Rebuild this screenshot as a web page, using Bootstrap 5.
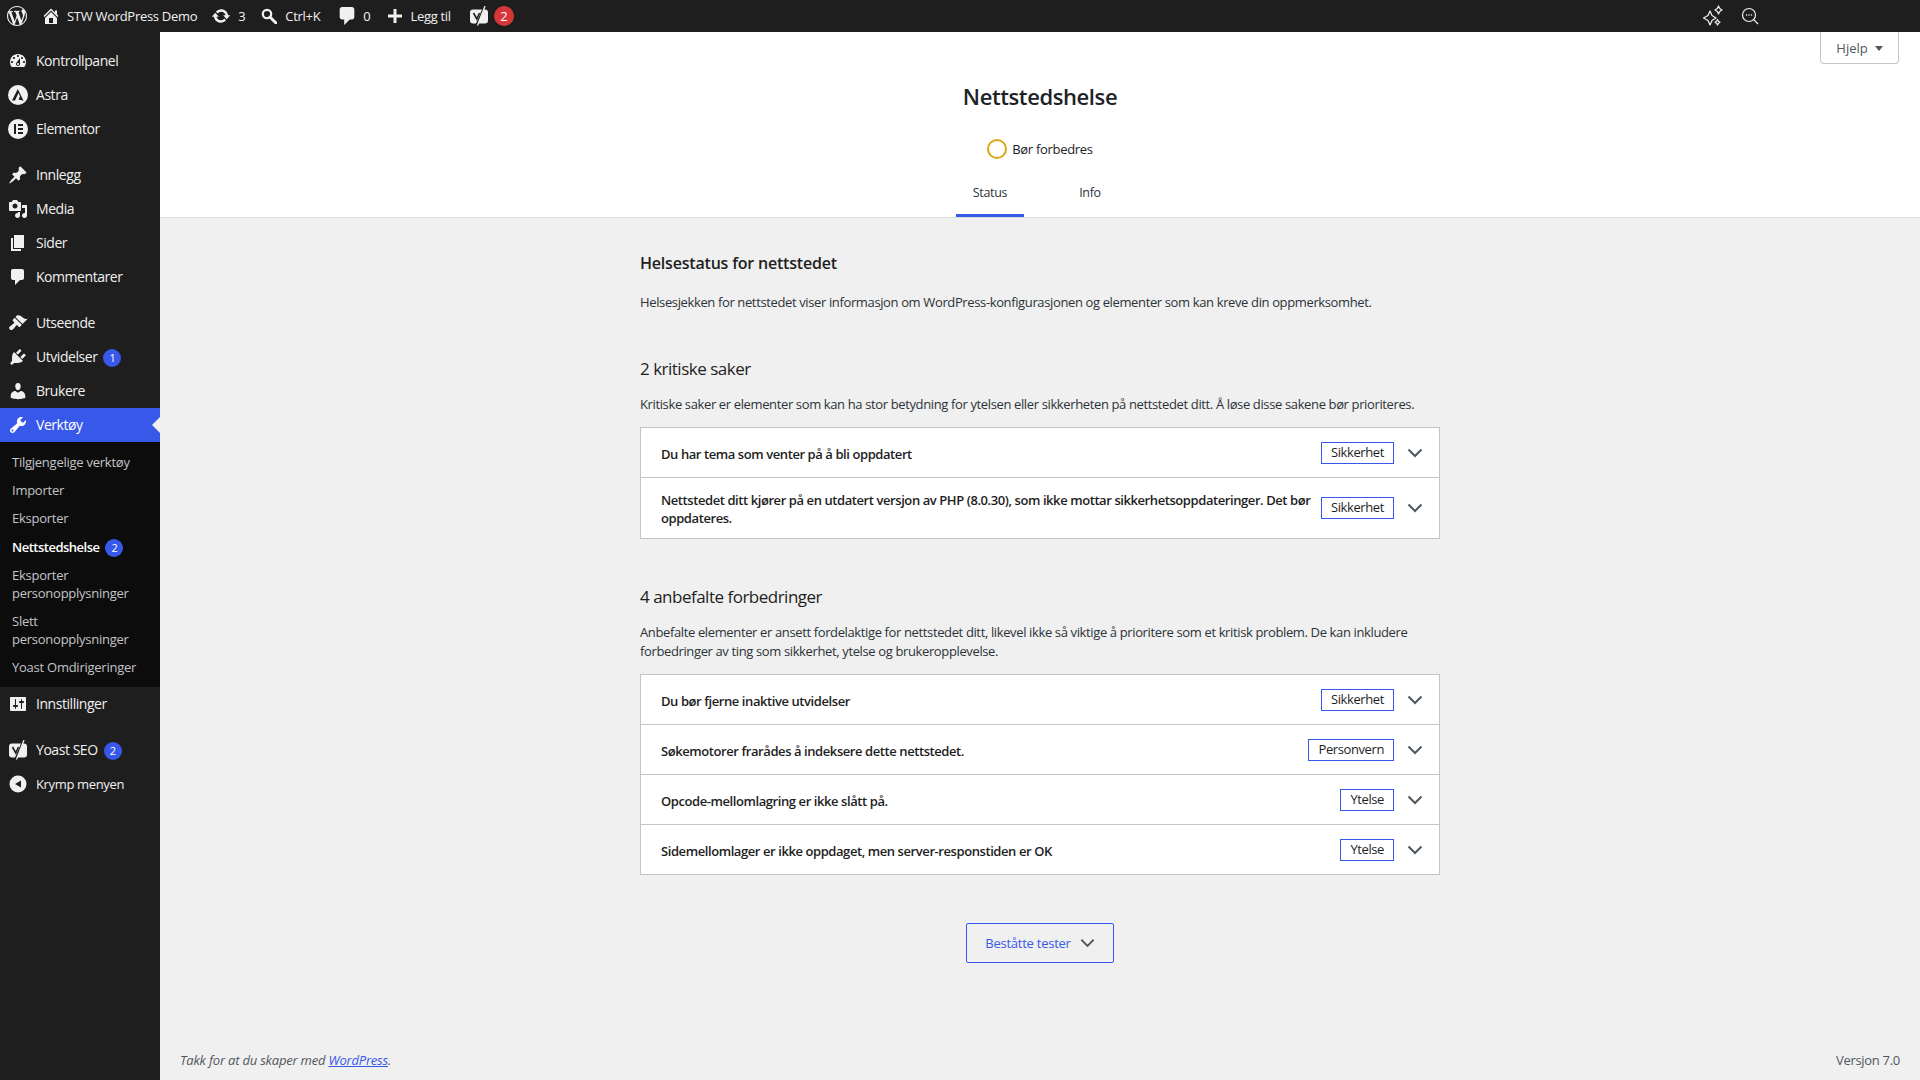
<!DOCTYPE html>
<html lang="nb">
<head>
    <meta charset="UTF-8">
    <meta name="viewport" content="width=device-width, initial-scale=1.0">
    <title>Nettstedshelse</title>
    <link href="https://cdn.jsdelivr.net/npm/bootstrap@5.3.0/dist/css/bootstrap.min.css" rel="stylesheet">
    <style>
        body {
            font-family: "Open Sans", "Noto Sans", sans-serif;
            font-size: 13px;
            letter-spacing: -0.3px;
            line-height: 1.4;
            background-color: #f0f0f0;
            color: #1e1e1e;
            min-height: 1080px;
        }
        svg { fill: currentColor; flex-shrink: 0; display: block; }

        /* top bar */
        .adminbar { height: 32px; background-color: #1e1e1e; color: #f0f0f0; }
        .bar-item { height: 32px; gap: 8px; }
        .bar-logo { margin: 0 16px 0 7px; }
        .bar-site { margin-right: 15px; }
        .bar-update { margin-right: 16px; }
        .bar-search { margin-right: 19px; }
        .bar-comments { margin-right: 18px; }
        .bar-new { margin-right: 19px; }
        .bar-bubble { width: 20px; height: 20px; border-radius: 50%; background-color: #d63638; color: #fff; margin-left: -2px; }
        .bar-right { margin-left: auto; margin-right: 161px; gap: 17px; }

        /* side menu */
        .sidemenu { width: 160px; background-color: #1e1e1e; color: #f0f0f0; padding-top: 12px; flex-shrink: 0; font-size: 14px; letter-spacing: -0.45px; }
        .menu-row { height: 34px; padding-left: 8px; gap: 8px; }
        .menu-row svg { color: #f0f0f0; }
        .menu-gap { height: 12px; }
        .menu-active { background-color: #3858e9; color: #fff; position: relative; }
        .menu-active svg { color: #fff; }
        .menu-active::after {
            content: ""; position: absolute; right: 0; top: 9px;
            border: 8px solid transparent; border-right-color: #f0f0f0; border-left-width: 0;
        }
        .submenu { background-color: #0c0c0c; padding: 6px 0; font-size: 13px; color: #c3c4c7; letter-spacing: -0.25px; }
        .submenu-row { padding: 5px 12px; line-height: 18px; }
        .submenu-on { color: #fff; font-weight: 600; letter-spacing: -0.5px; padding: 6px 12px 4px; }
        .count-dot {
            display: inline-flex; align-items: center; justify-content: center; width: 18px; height: 18px;
            border-radius: 50%; background-color: #3858e9; color: #fff; font-size: 11px; font-weight: 400; margin-left: 3px;
        }
        .menu-row .count-dot { margin-left: 6px; }
        .fold-label { font-size: 13px; letter-spacing: -0.35px; }

        /* page */
        .page-main { min-height: 1048px; }
        .health-head { background-color: #fff; height: 186px; border-bottom: 1px solid #dcdcde; padding-top: 48px; position: relative; }
        .health-title { font-size: 22px; font-weight: 600; line-height: 32px; letter-spacing: -0.4px; color: #1d2327; margin: 0; }
        .health-state { gap: 5px; margin-top: 25px; height: 24px; color: #1d2327; }
        .state-ring { width: 20px; height: 20px; border-radius: 50%; border: 2px solid #dba617; }
        .health-tabs { gap: 32px; margin-top: auto; }
        .health-tab { width: 68px; height: 50px; line-height: 52px; text-align: center; font-size: 12.5px; color: #2c3338; }
        .tab-on { border-bottom: 3px solid #3858e9; font-weight: 500; }
        .help-tab {
            position: absolute; right: 21px; top: 0; width: 79px; height: 32px; padding-top: 2px; background-color: #fff;
            border: 1px solid #c3c4c7; border-top: 0; border-radius: 0 0 4px 4px; color: #50575e; gap: 7px;
        }
        .help-caret { border: 4px solid transparent; border-top: 5px solid #50575e; border-bottom: 0; }

        .health-body { width: 800px; margin: 0 auto; letter-spacing: -0.37px; }
        .sec-title { font-size: 16px; font-weight: 600; line-height: 24px; margin: 33px 0 0; letter-spacing: -0.2px; }
        .sec-sub { font-size: 17px; font-weight: 400; line-height: 26px; margin: 44px 0 0; letter-spacing: -0.5px; }
        .sec-sub-next { margin-top: 45px; }
        .sec-text { line-height: 19px; margin: 13px 0 0; color: #2c3338; }
        .sec-intro { margin-top: 18px; }
        .issue-list { background-color: #fff; border: 1px solid #c3c4c7; margin-top: 13px; }
        .issue-row { min-height: 50px; padding: 11px 16px 11px 20px; font-weight: 600; gap: 8px; border-bottom: 1px solid #c3c4c7; letter-spacing: -0.42px; }
        .issue-row:last-child { border-bottom: 0; min-height: 49px; }
        .issue-text { line-height: 18px; padding-top: 2px; }
        .issue-tag { border: 1px solid #3858e9; height: 22px; padding: 0 9px; line-height: 18px; font-weight: 400; flex-shrink: 0; margin-left: auto; letter-spacing: -0.4px; }
        .chev { color: #50575e; margin-left: 5px; }
        .passed-btn {
            width: 148px; height: 40px; border: 1px solid #3858e9; border-radius: 2px; color: #3858e9; gap: 9px;
            background-color: transparent; margin: 48px auto 0; letter-spacing: -0.25px;
        }
        .page-foot { padding: 0 20px; margin-top: auto; height: 40px; color: #50575e; }
        .page-foot em { letter-spacing: -0.2px; }
        .page-foot a { color: #3858e9; }
    </style>
</head>
<body>

<!-- Admin bar -->
<div class="adminbar d-flex align-items-center">
    <svg class="bar-logo" width="20" height="20" viewBox="0 0 20 20"><path d="M20 10c0-5.51-4.49-10-10-10C4.48 0 0 4.49 0 10c0 5.52 4.48 10 10 10 5.51 0 10-4.48 10-10zM7.78 15.37L4.37 6.22c.55-.02 1.17-.08 1.17-.08.5-.06.44-1.13-.06-1.11 0 0-1.45.11-2.37.11-.18 0-.37 0-.58-.01C4.12 2.69 6.87 1.11 10 1.11c2.33 0 4.45.87 6.05 2.34-.68-.11-1.65.39-1.65 1.58 0 .74.45 1.36.9 2.1.35.61.55 1.36.55 2.46 0 1.49-1.4 5-1.4 5l-3.03-8.37c.54-.02.82-.17.82-.17.5-.05.44-1.25-.06-1.22 0 0-1.44.12-2.38.12-.87 0-2.33-.12-2.33-.12-.5-.03-.56 1.2-.06 1.22l.92.08 1.26 3.41zM17.41 10c.24-.64.74-1.87.43-4.25.7 1.29 1.05 2.71 1.05 4.25 0 3.29-1.73 6.24-4.4 7.78.97-2.59 1.94-5.2 2.92-7.78zM6.1 18.09C3.12 16.65 1.11 13.53 1.11 10c0-1.3.23-2.48.72-3.59C3.25 10.3 4.67 14.2 6.1 18.09zm4.03-6.63l2.58 6.98c-.86.29-1.76.45-2.71.45-.79 0-1.57-.11-2.29-.33.81-2.38 1.62-4.74 2.42-7.1z"/></svg>
    <div class="bar-item bar-site d-flex align-items-center">
        <svg width="16" height="16" viewBox="2 2 16 16"><path d="M16 8.5l1.53 1.53-1.06 1.06L10 4.62l-6.47 6.47-1.06-1.06L10 2.5l4 4v-2h2v4zm-6-2.46l6 5.99V18H4v-5.97zM12 17v-5H8v5h4z"/></svg>
        <span>STW WordPress Demo</span>
    </div>
    <div class="bar-item bar-update d-flex align-items-center">
        <svg width="18" height="18" viewBox="1 1 18 18"><path d="M10.2 3.28c3.53 0 6.43 2.61 6.92 6h2.08l-3.5 4-3.5-4h2.32c-.45-1.97-2.21-3.45-4.32-3.45-1.45 0-2.73.71-3.54 1.78L4.95 5.66C6.23 4.2 8.11 3.28 10.2 3.28zm-.4 13.44c-3.52 0-6.43-2.61-6.92-6H.8l3.5-4c1.17 1.33 2.33 2.67 3.5 4H5.48c.45 1.97 2.21 3.45 4.32 3.45 1.45 0 2.73-.71 3.54-1.78l1.71 1.95c-1.28 1.46-3.15 2.38-5.25 2.38z"/></svg>
        <span>3</span>
    </div>
    <div class="bar-item bar-search d-flex align-items-center">
        <svg width="16" height="16" viewBox="0 0 16 16"><circle cx="6" cy="6" r="4.2" fill="none" stroke="currentColor" stroke-width="2.2"/><path d="M9 9l6 6" stroke="currentColor" stroke-width="3" stroke-linecap="round"/></svg>
        <span>Ctrl+K</span>
    </div>
    <div class="bar-item bar-comments d-flex align-items-center">
        <svg width="16" height="18" viewBox="3 2 13 16"><path d="M5 2h9c1.1 0 2 .9 2 2v7c0 1.1-.9 2-2 2h-2l-5 5v-5H5c-1.1 0-2-.9-2-2V4c0-1.1.9-2 2-2z"/></svg>
        <span>0</span>
    </div>
    <div class="bar-item bar-new d-flex align-items-center">
        <svg width="14" height="14" viewBox="0 0 14 14"><path d="M5.5 0h3v5.5H14v3H8.500V14h-3V8.500H0v-3h5.500z"/></svg>
        <span>Legg til</span>
    </div>
    <div class="bar-item d-flex align-items-center">
        <svg width="18" height="20" viewBox="0 0 18 20"><path d="M3 3.500h9l-6 14H3a3 3 0 0 1-3-3v-8a3 3 0 0 1 3-3zM14 3.500h1a3 3 0 0 1 3 3v8a3 3 0 0 1-3 3H8z"/><path d="M3.500 7l3.300 6L9.500 7" fill="none" stroke="#1e1e1e" stroke-width="1.600"/><path d="M15 0L7.500 19.500" stroke="currentColor" stroke-width="1.300"/></svg>
        <span class="bar-bubble d-flex align-items-center justify-content-center">2</span>
    </div>
    <div class="bar-right d-flex align-items-center">
        <svg width="22" height="22" viewBox="0 0 22 22"><g fill="none" stroke="currentColor" stroke-width="1.200" stroke-linejoin="round"><path d="M8 6l2 4.500L14 13l-4 2.500L8 20l-2-4.500L1.500 13 6 10.500z"/><path d="M16.500 1l1.200 2.500L20 5l-2.300 1.500-1.200 2.500-1.200-2.500L13 5l2.300-1.500z"/><path d="M15.500 14.500l.9 1.700 1.600 1-1.600 1-.9 1.800-.9-1.800-1.600-1 1.600-1z"/></g></svg>
        <svg width="18" height="18" viewBox="0 0 18 18"><circle cx="8" cy="8" r="6.500" fill="none" stroke="currentColor" stroke-width="1.200"/><path d="M12.700 12.700L17 17" stroke="currentColor" stroke-width="1.200"/><circle cx="5.500" cy="8" r=".8"/><circle cx="8" cy="8" r=".8"/><circle cx="10.500" cy="8" r=".8"/></svg>
    </div>
</div>

<div class="d-flex">
    <!-- Side menu -->
    <nav class="sidemenu">
        <div class="menu-row d-flex align-items-center">
            <svg width="20" height="20" viewBox="0 0 20 20"><path d="M3.760 16h12.480c1.100-1.370 1.760-3.110 1.760-5 0-4.420-3.580-8-8-8s-8 3.580-8 8c0 1.890.660 3.630 1.760 5zM10 4c.550 0 1 .450 1 1s-.450 1-1 1-1-.450-1-1 .450-1 1-1zM6 6c.550 0 1 .450 1 1s-.450 1-1 1-1-.450-1-1 .450-1 1-1zm8 0c.550 0 1 .450 1 1s-.450 1-1 1-1-.450-1-1 .450-1 1-1zm-5.370 5.550L12 7v6c0 1.100-.900 2-2 2s-2-.900-2-2c0-.570.240-1.080.630-1.450zM4 10c.550 0 1 .450 1 1s-.450 1-1 1-1-.450-1-1 .450-1 1-1zm12 0c.550 0 1 .450 1 1s-.450 1-1 1-1-.450-1-1 .450-1 1-1zm-5 3c0-.550-.450-1-1-1s-1 .450-1 1 .450 1 1 1 1-.450 1-1z" fill-rule="evenodd"/></svg>
            <span>Kontrollpanel</span>
        </div>
        <div class="menu-row d-flex align-items-center">
            <svg width="20" height="20" viewBox="0 0 20 20"><path fill-rule="evenodd" d="M10 0a10 10 0 1 1 0 20 10 10 0 0 1 0-20zM9.800 4L4 15.500h3L10.500 8l1.500 3.200-1.500 3.300 5 1.300z"/></svg>
            <span>Astra</span>
        </div>
        <div class="menu-row d-flex align-items-center">
            <svg width="20" height="20" viewBox="0 0 20 20"><path fill-rule="evenodd" d="M10 0a10 10 0 1 1 0 20 10 10 0 0 1 0-20zM6 5v10h2V5zm4 0v2h5V5zm0 4v2h5V9zm0 4v2h5v-2z"/></svg>
            <span>Elementor</span>
        </div>
        <div class="menu-gap"></div>
        <div class="menu-row d-flex align-items-center">
            <svg width="20" height="20" viewBox="0 0 20 20"><path d="M10.440 3.020l1.820-1.820 6.360 6.350-1.830 1.820c-1.050-.680-2.480-.570-3.410.360l-.750.750c-.920.930-1.040 2.350-.350 3.410l-1.830 1.820-2.410-2.410-2.800 2.790c-.420.420-3.380 2.710-3.800 2.290s1.860-3.390 2.280-3.810l2.790-2.790L4.100 9.360l1.830-1.820c1.050.690 2.480.570 3.400-.360l.750-.750c.930-.920 1.050-2.350.360-3.410z"/></svg>
            <span>Innlegg</span>
        </div>
        <div class="menu-row d-flex align-items-center">
            <svg width="20" height="20" viewBox="0 0 20 20"><path fill-rule="evenodd" d="M13 11V4c0-.550-.450-1-1-1h-1.670L9 1H5L3.670 3H2c-.550 0-1 .450-1 1v7c0 .550.450 1 1 1h10c.550 0 1-.450 1-1zM7 4.500c1.380 0 2.500 1.120 2.500 2.500S8.380 9.500 7 9.500 4.500 8.380 4.500 7 5.620 4.500 7 4.500zM14 6h5v10.500c0 1.380-1.120 2.500-2.500 2.500S14 17.880 14 16.500s1.120-2.500 2.500-2.500c.170 0 .340.020.500.050V9h-3V6zm-4 8.050V13h2v3.500c0 1.380-1.120 2.500-2.500 2.500S7 17.880 7 16.500 8.120 14 9.500 14c.170 0 .340.020.500.050z"/></svg>
            <span>Media</span>
        </div>
        <div class="menu-row d-flex align-items-center">
            <svg width="20" height="20" viewBox="0 0 20 20"><path d="M6 15V2h10v13H6zm-1 1h8v2H3V5h2v11z"/></svg>
            <span>Sider</span>
        </div>
        <div class="menu-row d-flex align-items-center">
            <svg width="20" height="20" viewBox="0 0 20 20"><path d="M5 2h9c1.100 0 2 .900 2 2v7c0 1.100-.900 2-2 2h-2l-5 5v-5H5c-1.100 0-2-.900-2-2V4c0-1.100.900-2 2-2z"/></svg>
            <span>Kommentarer</span>
        </div>
        <div class="menu-gap"></div>
        <div class="menu-row d-flex align-items-center">
            <svg width="20" height="20" viewBox="0 0 20 20"><path d="M14.480 11.060L7.410 3.990l1.500-1.500c.500-.560 2.300-.470 3.510.320 1.210.800 1.430 1.280 2.910 2.100 1.180.640 2.450 1.260 4.450.850zm-.710.710L6.700 4.700 4.930 6.470c-.390.390-.390 1.020 0 1.410l1.060 1.060c.390.390.390 1.030 0 1.420-.600.600-1.430 1.110-2.210 1.690-.350.260-.700.530-1.010.840C1.430 13.230.760 14.370 1.200 15.600c.190.520.540.950 1.010 1.200.990.540 2.210.230 3.460-.990.310-.310.580-.660.840-1.010.580-.780 1.090-1.610 1.690-2.210.390-.390 1.030-.390 1.420 0l1.060 1.060c.390.390 1.020.390 1.410 0z"/></svg>
            <span>Utseende</span>
        </div>
        <div class="menu-row d-flex align-items-center">
            <svg width="20" height="20" viewBox="0 0 20 20"><path d="M13.110 4.360L9.870 7.600 8 5.730l3.240-3.240c.350-.340 1.050-.200 1.560.320.520.510.660 1.210.310 1.550zm-8 1.770l.910-1.120 9.010 9.010-1.190.840c-.710.710-2.630 1.160-3.820 1.160H6.140L4.900 17.260c-.590.590-1.540.590-2.120 0-.590-.580-.590-1.530 0-2.120l1.240-1.240v-3.880c0-1.130.400-3.190 1.090-3.890zm7.260 3.970l3.240-3.240c.340-.350 1.040-.210 1.550.310.520.510.660 1.210.31 1.550l-3.240 3.250z"/></svg>
            <span>Utvidelser<span class="count-dot">1</span></span>
        </div>
        <div class="menu-row d-flex align-items-center">
            <svg width="20" height="20" viewBox="0 0 20 20"><path d="M10 9.250c-2.270 0-2.730-3.440-2.730-3.440C7 4.020 7.820 2 9.970 2c2.160 0 2.980 2.020 2.710 3.810 0 0-.410 3.440-2.680 3.440zm0 2.570L12.720 10c2.390 0 4.520 2.330 4.520 4.530v2.490s-3.650 1.130-7.240 1.130c-3.650 0-7.240-1.130-7.240-1.130v-2.490c0-2.250 1.940-4.480 4.470-4.480z"/></svg>
            <span>Brukere</span>
        </div>
        <div class="menu-row menu-active d-flex align-items-center">
            <svg width="20" height="20" viewBox="0 0 20 20"><path fill-rule="evenodd" d="M16.680 9.770c-1.340 1.340-3.300 1.670-4.950.990l-5.410 6.520c-.990.990-2.590.990-3.580 0s-.990-2.590 0-3.570l6.520-5.420c-.680-1.650-.350-3.610.990-4.950 1.280-1.280 3.120-1.620 4.720-1.060l-2.890 2.890 2.820 2.820 2.860-2.870c.530 1.580.180 3.390-1.080 4.650zM3.810 16.210c.400.390 1.040.390 1.430 0 .400-.400.400-1.040 0-1.430-.390-.400-1.030-.400-1.430 0-.390.390-.390 1.030 0 1.430z"/></svg>
            <span>Verktøy</span>
        </div>
        <div class="submenu">
            <div class="submenu-row">Tilgjengelige verktøy</div>
            <div class="submenu-row">Importer</div>
            <div class="submenu-row">Eksporter</div>
            <div class="submenu-row submenu-on">Nettstedshelse <span class="count-dot">2</span></div>
            <div class="submenu-row">Eksporter personopplysninger</div>
            <div class="submenu-row">Slett personopplysninger</div>
            <div class="submenu-row">Yoast Omdirigeringer</div>
        </div>
        <div class="menu-row d-flex align-items-center">
            <svg width="20" height="20" viewBox="0 0 20 20"><path fill-rule="evenodd" d="M18 16V4c0-.550-.450-1-1-1H3c-.550 0-1 .450-1 1v12c0 .550.450 1 1 1h14c.550 0 1-.450 1-1zM8 11h1c.550 0 1 .450 1 1s-.450 1-1 1H8v1.500c0 .280-.220.500-.500.500s-.500-.220-.500-.500V13H6c-.550 0-1-.450-1-1s.450-1 1-1h1V5.500c0-.280.220-.500.500-.500s.500.220.500.500V11zm5-2h-1c-.550 0-1-.450-1-1s.450-1 1-1h1V5.500c0-.280.220-.500.500-.500s.500.220.500.500V7h1c.550 0 1 .450 1 1s-.450 1-1 1h-1v5.500c0 .280-.220.500-.500.500s-.500-.220-.500-.500V9z"/></svg>
            <span>Innstillinger</span>
        </div>
        <div class="menu-gap"></div>
        <div class="menu-row d-flex align-items-center">
            <svg width="20" height="20" viewBox="0 0 18 20"><path d="M3 3.500h9l-6 14H3a3 3 0 0 1-3-3v-8a3 3 0 0 1 3-3zM14 3.500h1a3 3 0 0 1 3 3v8a3 3 0 0 1-3 3H8z"/><path d="M3.500 7l3.300 6L9.500 7" fill="none" stroke="#1e1e1e" stroke-width="1.600"/><path d="M15 0L7.500 19.500" stroke="currentColor" stroke-width="1.300"/></svg>
            <span>Yoast SEO<span class="count-dot">2</span></span>
        </div>
        <div class="menu-row d-flex align-items-center">
            <svg width="20" height="20" viewBox="0 0 20 20"><path fill-rule="evenodd" d="M10 1.500a8.500 8.500 0 1 1 0 17 8.500 8.500 0 0 1 0-17zM13 6.500L7 10l6 3.500z"/></svg>
            <span class="fold-label">Krymp menyen</span>
        </div>
    </nav>

    <!-- Main -->
    <main class="page-main flex-grow-1 d-flex flex-column">
        <div class="health-head d-flex flex-column align-items-center">
            <button class="help-tab d-flex align-items-center justify-content-center" type="button">Hjelp <span class="help-caret"></span></button>
            <h1 class="health-title">Nettstedshelse</h1>
            <div class="health-state d-flex align-items-center">
                <span class="state-ring"></span>
                <span>Bør forbedres</span>
            </div>
            <div class="health-tabs d-flex">
                <div class="health-tab tab-on">Status</div>
                <div class="health-tab">Info</div>
            </div>
        </div>

        <div class="health-body">
            <h2 class="sec-title">Helsestatus for nettstedet</h2>
            <p class="sec-text sec-intro">Helsesjekken for nettstedet viser informasjon om WordPress-konfigurasjonen og elementer som kan kreve din oppmerksomhet.</p>

            <h3 class="sec-sub">2 kritiske saker</h3>
            <p class="sec-text">Kritiske saker er elementer som kan ha stor betydning for ytelsen eller sikkerheten på nettstedet ditt. Å løse disse sakene bør prioriteres.</p>
            <div class="issue-list">
                <div class="issue-row d-flex align-items-center">
                    <span class="issue-text">Du har tema som venter på å bli oppdatert</span>
                    <span class="issue-tag">Sikkerhet</span>
                    <svg class="chev" width="16" height="10" viewBox="0 0 16 10"><path d="M1.500 1.500L8 8l6.500-6.500" fill="none" stroke="currentColor" stroke-width="2"/></svg>
                </div>
                <div class="issue-row d-flex align-items-center">
                    <span class="issue-text">Nettstedet ditt kjører på en utdatert versjon av PHP (8.0.30), som ikke mottar sikkerhetsoppdateringer. Det bør oppdateres.</span>
                    <span class="issue-tag">Sikkerhet</span>
                    <svg class="chev" width="16" height="10" viewBox="0 0 16 10"><path d="M1.500 1.500L8 8l6.500-6.500" fill="none" stroke="currentColor" stroke-width="2"/></svg>
                </div>
            </div>

            <h3 class="sec-sub sec-sub-next">4 anbefalte forbedringer</h3>
            <p class="sec-text">Anbefalte elementer er ansett fordelaktige for nettstedet ditt, likevel ikke så viktige å prioritere som et kritisk problem. De kan inkludere forbedringer av ting som sikkerhet, ytelse og brukeropplevelse.</p>
            <div class="issue-list">
                <div class="issue-row d-flex align-items-center">
                    <span class="issue-text">Du bør fjerne inaktive utvidelser</span>
                    <span class="issue-tag">Sikkerhet</span>
                    <svg class="chev" width="16" height="10" viewBox="0 0 16 10"><path d="M1.500 1.500L8 8l6.500-6.500" fill="none" stroke="currentColor" stroke-width="2"/></svg>
                </div>
                <div class="issue-row d-flex align-items-center">
                    <span class="issue-text">Søkemotorer frarådes å indeksere dette nettstedet.</span>
                    <span class="issue-tag">Personvern</span>
                    <svg class="chev" width="16" height="10" viewBox="0 0 16 10"><path d="M1.500 1.500L8 8l6.500-6.500" fill="none" stroke="currentColor" stroke-width="2"/></svg>
                </div>
                <div class="issue-row d-flex align-items-center">
                    <span class="issue-text">Opcode-mellomlagring er ikke slått på.</span>
                    <span class="issue-tag">Ytelse</span>
                    <svg class="chev" width="16" height="10" viewBox="0 0 16 10"><path d="M1.500 1.500L8 8l6.500-6.500" fill="none" stroke="currentColor" stroke-width="2"/></svg>
                </div>
                <div class="issue-row d-flex align-items-center">
                    <span class="issue-text">Sidemellomlager er ikke oppdaget, men server-responstiden er OK</span>
                    <span class="issue-tag">Ytelse</span>
                    <svg class="chev" width="16" height="10" viewBox="0 0 16 10"><path d="M1.500 1.500L8 8l6.500-6.500" fill="none" stroke="currentColor" stroke-width="2"/></svg>
                </div>
            </div>

            <button class="passed-btn d-flex align-items-center justify-content-center" type="button">Beståtte tester
                <svg width="15" height="10" viewBox="0 0 16 10"><path d="M1.500 1.500L8 8l6.500-6.500" fill="none" stroke="#50575e" stroke-width="2"/></svg>
            </button>
        </div>

        <footer class="page-foot d-flex justify-content-between align-items-center">
            <em>Takk for at du skaper med <a href="#">WordPress</a>.</em>
            <span>Versjon 7.0</span>
        </footer>
    </main>
</div>

<script src="https://cdn.jsdelivr.net/npm/bootstrap@5.3.0/dist/js/bootstrap.bundle.min.js"></script>
</body>
</html>
